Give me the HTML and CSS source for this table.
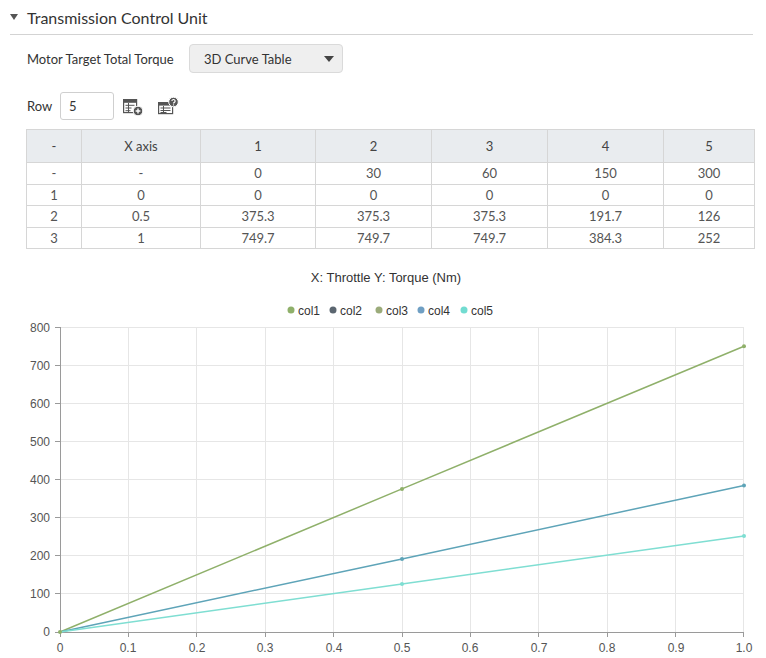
FILE: index.html
```html
<!DOCTYPE html>
<html>
<head>
<meta charset="utf-8">
<link rel="stylesheet" href="styles.css">
</head>
<body>
<div class="section">
  <div class="head">
    <span class="head-caret"></span>
    <span class="head-title">Transmission Control Unit</span>
  </div>
  <div class="form-row">
    <span class="form-label">Motor Target Total Torque</span>
    <div class="select">
      <span>3D Curve Table</span>
      <span class="select-caret"></span>
    </div>
  </div>
  <div class="row-line">
    <span class="row-label">Row</span>
    <div class="row-input">5</div>
    <svg class="icon" viewBox="0 0 22 20" width="22" height="20">
      <rect x="1.6" y="3.6" width="13" height="13" fill="none" stroke="#555" stroke-width="1.2"/>
      <rect x="1.6" y="3.6" width="13" height="3.2" fill="#555"/>
      <path d="M3.5 9.3h9M3.5 12h6M3.5 14.7h5M6.5 7v9" stroke="#555" stroke-width="1"/>
      <circle cx="16" cy="15" r="4.8" fill="#555" stroke="#fff" stroke-width="1"/>
      <path d="M13.6 15h4.8M16 12.6v4.8" stroke="#fff" stroke-width="1.4"/>
    </svg>
    <svg class="icon icon2" viewBox="0 0 22 20" width="22" height="20">
      <rect x="1.6" y="6.6" width="14" height="11" fill="none" stroke="#555" stroke-width="1.2"/>
      <rect x="1.6" y="6.6" width="14" height="3" fill="#555"/>
      <path d="M3.5 12h10M3.5 14.5h10M3.5 16.5h6M6.5 10v7" stroke="#555" stroke-width="1"/>
      <circle cx="16.5" cy="6" r="4.8" fill="#555" stroke="#fff" stroke-width="1"/>
      <path d="M14.9 5.1a1.6 1.6 0 1 1 2.2 1.5c-0.5 0.2-0.6 0.5-0.6 1" fill="none" stroke="#fff" stroke-width="1.2"/>
      <circle cx="16.5" cy="8.9" r="0.7" fill="#fff"/>
    </svg>
  </div>
  <table class="grid">
    <colgroup>
      <col style="width:55px"><col style="width:119px"><col style="width:115px"><col style="width:116px"><col style="width:116px"><col style="width:116px"><col style="width:91px">
    </colgroup>
    <thead>
      <tr><th>-</th><th>X axis</th><th>1</th><th>2</th><th>3</th><th>4</th><th>5</th></tr>
    </thead>
    <tbody>
      <tr><td>-</td><td>-</td><td>0</td><td>30</td><td>60</td><td>150</td><td>300</td></tr>
      <tr><td>1</td><td>0</td><td>0</td><td>0</td><td>0</td><td>0</td><td>0</td></tr>
      <tr><td>2</td><td>0.5</td><td>375.3</td><td>375.3</td><td>375.3</td><td>191.7</td><td>126</td></tr>
      <tr><td>3</td><td>1</td><td>749.7</td><td>749.7</td><td>749.7</td><td>384.3</td><td>252</td></tr>
    </tbody>
  </table>
</div>
<svg class="chart" viewBox="0 258 766 400" width="766" height="400">
  <text class="c-title" x="386" y="282" text-anchor="middle">X: Throttle Y: Torque (Nm)</text>
  <g class="legend">
    <circle cx="291" cy="310" r="3.5" fill="#8fb06a"/><text x="298" y="314.5">col1</text>
    <circle cx="333" cy="310" r="3.5" fill="#5b6670"/><text x="340" y="314.5">col2</text>
    <circle cx="379" cy="310" r="3.5" fill="#9bab7a"/><text x="386" y="314.5">col3</text>
    <circle cx="421" cy="310" r="3.5" fill="#6f9fc3"/><text x="428" y="314.5">col4</text>
    <circle cx="464" cy="310" r="3.5" fill="#72dcd1"/><text x="471" y="314.5">col5</text>
  </g>
  <g stroke="#e6e6e6" stroke-width="1">
    <path d="M60 327.5H744M60 365.5H744M60 403.5H744M60 441.5H744M60 479.5H744M60 517.5H744M60 555.5H744M60 593.5H744"/>
    <path d="M128.5 327V632M196.5 327V632M265.5 327V632M333.5 327V632M402.5 327V632M470.5 327V632M538.5 327V632M607.5 327V632M675.5 327V632M743.5 327V632"/>
  </g>
  <g stroke="#9a9a9a" stroke-width="1">
    <path d="M60.5 327V637M55 632.5H744"/>
    <path d="M55 327.5H60M55 365.5H60M55 403.5H60M55 441.5H60M55 479.5H60M55 517.5H60M55 555.5H60M55 593.5H60"/>
    <path d="M128.5 632V637M196.5 632V637M265.5 632V637M333.5 632V637M402.5 632V637M470.5 632V637M538.5 632V637M607.5 632V637M675.5 632V637M743.5 632V637"/>
  </g>
  <g class="ylab" text-anchor="end">
    <text x="50" y="332">800</text><text x="50" y="370">700</text><text x="50" y="408">600</text><text x="50" y="446">500</text>
    <text x="50" y="484">400</text><text x="50" y="522">300</text><text x="50" y="560">200</text><text x="50" y="598">100</text><text x="50" y="636">0</text>
  </g>
  <g class="xlab" text-anchor="middle">
    <text x="60" y="652">0</text><text x="128" y="652">0.1</text><text x="197" y="652">0.2</text><text x="265" y="652">0.3</text><text x="334" y="652">0.4</text>
    <text x="402" y="652">0.5</text><text x="470" y="652">0.6</text><text x="539" y="652">0.7</text><text x="607" y="652">0.8</text><text x="676" y="652">0.9</text><text x="744" y="652">1.0</text>
  </g>
  <g fill="none" stroke-width="1.5">
    <polyline points="60,632 402,488.9 744,346.2" stroke="#8fb06a"/>
    <polyline points="60,632 402,558.9 744,485.5" stroke="#5ea4b8"/>
    <polyline points="60,632 402,584 744,535.9" stroke="#7fded2"/>
  </g>
  <g>
    <circle cx="60" cy="632" r="2" fill="#8fb06a"/>
    <circle cx="402" cy="488.9" r="2" fill="#8fb06a"/>
    <circle cx="744" cy="346.2" r="2" fill="#8fb06a"/>
    <circle cx="402" cy="558.9" r="2" fill="#5ea4b8"/>
    <circle cx="744" cy="485.5" r="2" fill="#5ea4b8"/>
    <circle cx="402" cy="584" r="2" fill="#7fded2"/>
    <circle cx="744" cy="535.9" r="2" fill="#7fded2"/>
  </g>
</svg>
</body>
</html>
```
FILE: styles.css
```css
html, body {
  margin: 0;
  padding: 0;
  background: #ffffff;
}
body {
  font-family: "Lato", "Noto Sans", sans-serif;
  color: #333;
  width: 766px;
  height: 658px;
  overflow: hidden;
}
.section {
  padding: 0 13px 0 10px;
}
.head {
  height: 34px;
  border-bottom: 1px solid #d3d3d3;
  display: flex;
  align-items: center;
}
.head-caret {
  width: 0;
  height: 0;
  border-left: 4px solid transparent;
  border-right: 4px solid transparent;
  border-top: 6px solid #555;
  margin-right: 9px;
}
.head-title {
  font-size: 16px;
  color: #333;
}
.form-row {
  margin-top: 9px;
  padding-left: 17px;
  display: flex;
  align-items: center;
}
.form-label {
  width: 162px;
  font-size: 13px;
  color: #333;
}
.select {
  box-sizing: border-box;
  width: 154px;
  height: 29px;
  background: #efefef;
  border: 1px solid #dadada;
  border-radius: 4px;
  display: flex;
  align-items: center;
  justify-content: space-between;
  padding: 0 8px 0 14px;
  font-size: 13px;
  color: #333;
}
.select-caret {
  width: 0;
  height: 0;
  border-left: 5px solid transparent;
  border-right: 5px solid transparent;
  border-top: 6px solid #444;
}
.row-line {
  margin-top: 19px;
  padding-left: 17px;
  display: flex;
  align-items: center;
}
.row-label {
  font-size: 13px;
  width: 33px;
}
.row-input {
  box-sizing: border-box;
  width: 54px;
  height: 28px;
  border: 1px solid #cfcfcf;
  border-radius: 3px;
  padding-left: 8px;
  display: flex;
  align-items: center;
  font-size: 13px;
  color: #333;
}
.icon {
  margin-left: 8px;
  display: block;
}
.icon2 {
  margin-left: 13px;
}
.grid {
  margin-top: 9px;
  margin-left: 16px;
  width: 728px;
  table-layout: fixed;
  border-collapse: collapse;
  font-size: 13px;
  color: #555;
}
.grid th, .grid td {
  border: 1px solid #d6d6d6;
  text-align: center;
  padding: 0;
  font-weight: normal;
}
.grid th {
  background: #e9ecef;
  height: 32px;
  color: #444;
}
.grid td {
  height: 20.5px;
}
.chart {
  display: block;
  margin-top: 9px;
}
.c-title {
  font-family: "Liberation Sans", Arial, sans-serif;
  font-size: 13px;
  fill: #333;
}
.legend text {
  font-family: "Liberation Sans", Arial, sans-serif;
  font-size: 12px;
  fill: #333;
}
.ylab text, .xlab text {
  font-family: "Liberation Sans", Arial, sans-serif;
  font-size: 12px;
  fill: #555;
}
```
